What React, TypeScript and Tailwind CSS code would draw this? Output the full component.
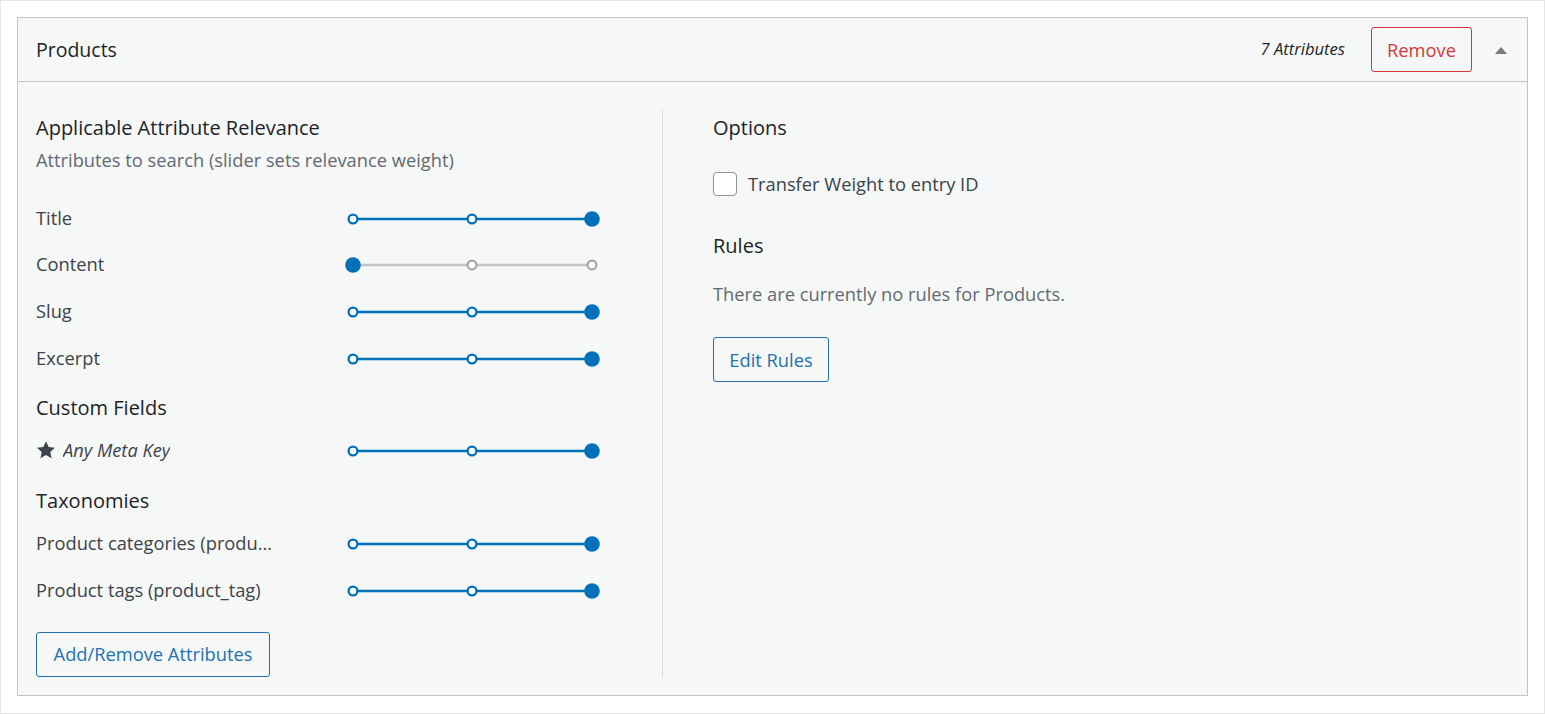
import React from "react";

const BLUE = "#0071b9";

function Slider({ value, active = true }: { value: 0 | 1 | 2; active?: boolean }) {
  const xs = [10, 129, 249];
  const lineColor = active ? BLUE : "#c3c4c7";
  return (
    <svg width="260" height="20" viewBox="0 0 260 20" className="block">
      <line x1={10} y1={10} x2={249} y2={10} stroke={lineColor} strokeWidth={2.5} />
      {xs.map((x, i) =>
        i === value ? (
          <circle key={i} cx={x} cy={10} r={7.8} fill={BLUE} />
        ) : (
          <circle key={i} cx={x} cy={10} r={4.4} fill="#fff" stroke={active ? BLUE : "#a7aaad"} strokeWidth={2.3} />
        )
      )}
    </svg>
  );
}

function Row({ label, value, active, icon, italic }: { label: string; value: 0 | 1 | 2; active?: boolean; icon?: boolean; italic?: boolean }) {
  return (
    <div className="flex items-center h-[46.67px]">
      <div className={`w-[246px] pr-[6px] flex items-center gap-[7px] min-w-0 text-[#3c434a] ${italic ? "italic" : ""}`}>
        {icon && (
          <svg width="20" height="20" viewBox="0 0 20 20" className="shrink-0">
            <path d="M10 1.2l2.7 5.7 6.2.8-4.6 4.3 1.2 6.2L10 15.1l-5.5 3.1 1.2-6.2L1.1 7.7l6.2-.8z" fill="#3c434a" />
          </svg>
        )}
        <span className="truncate">{label}</span>
      </div>
      <div className="ml-[61px] mt-[3px] shrink-0">
        <Slider value={value} active={active} />
      </div>
    </div>
  );
}

export default function App() {
  return (
    <div className="w-[1545px] h-[714px] bg-white border border-[#e5e5e5] p-[16px] text-[18.3px]" style={{ fontFamily: '"Open Sans", "Noto Sans", sans-serif' }}>
      <div className="h-[679px] w-[1511px] border border-[#c3c4c7] bg-[#f6f7f7] flex flex-col">
        <div className="h-[64px] border-b border-[#c3c4c7] flex items-center pl-[18px] pr-[19px] shrink-0">
          <div className="text-[19.5px] text-[#1d2327]">Products</div>
          <div className="ml-auto italic text-[16.6px] text-[#1d2327]">7 Attributes</div>
          <button className="ml-[26px] w-[101px] h-[45px] border border-[#d63638] rounded-[3px] text-[#d63638] text-[18.3px]">Remove</button>
          <svg width="14" height="10" viewBox="0 0 14 10" className="ml-[22px]">
            <path d="M1 9 L7 2 L13 9 Z" fill="#787c82" />
          </svg>
        </div>
        <div className="flex flex-1 pt-[28px] pb-[17px]">
          <div className="w-[645px] pl-[18px] border-r border-[#dcdcde] flex flex-col">
            <div className="text-[20px] text-[#1d2327] leading-[24px] mt-[6px]">Applicable Attribute Relevance</div>
            <div className="text-[#646970] leading-[24px] mt-[8px]">Attributes to search (slider sets relevance weight)</div>
            <div className="mt-[22px]">
              <Row label="Title" value={2} />
              <Row label="Content" value={0} active={false} />
              <Row label="Slug" value={2} />
              <Row label="Excerpt" value={2} />
            </div>
            <div className="text-[20px] text-[#1d2327] leading-[24px] mt-[15px]">Custom Fields</div>
            <div className="mt-[7px]">
              <Row label="Any Meta Key" value={2} icon italic />
            </div>
            <div className="text-[20px] text-[#1d2327] leading-[24px] mt-[16px]">Taxonomies</div>
            <div className="mt-[6px]">
              <Row label="Product categories (product_cat)" value={2} />
              <Row label="Product tags (product_tag)" value={2} />
            </div>
            <button className="mt-[19px] self-start w-[234px] h-[45px] border border-[#2271b1] rounded-[3px] text-[#2271b1] bg-[#f6f7f7]">Add/Remove Attributes</button>
          </div>
          <div className="pl-[50px] flex flex-col">
            <div className="text-[20px] text-[#1d2327] leading-[24px] mt-[6px]">Options</div>
            <label className="flex items-center gap-[11px] mt-[30px] text-[#3c434a]">
              <span className="w-[24px] h-[24px] rounded-[4px] border border-[#8c8f94] bg-white" />
              Transfer Weight to entry ID
            </label>
            <div className="text-[20px] text-[#1d2327] leading-[24px] mt-[37px]">Rules</div>
            <div className="text-[#646970] leading-[24px] mt-[24px]">There are currently no rules for Products.</div>
            <button className="mt-[31px] self-start w-[116px] h-[45px] border border-[#2271b1] rounded-[3px] text-[#2271b1] bg-[#f6f7f7]">Edit Rules</button>
          </div>
        </div>
      </div>
    </div>
  );
}
